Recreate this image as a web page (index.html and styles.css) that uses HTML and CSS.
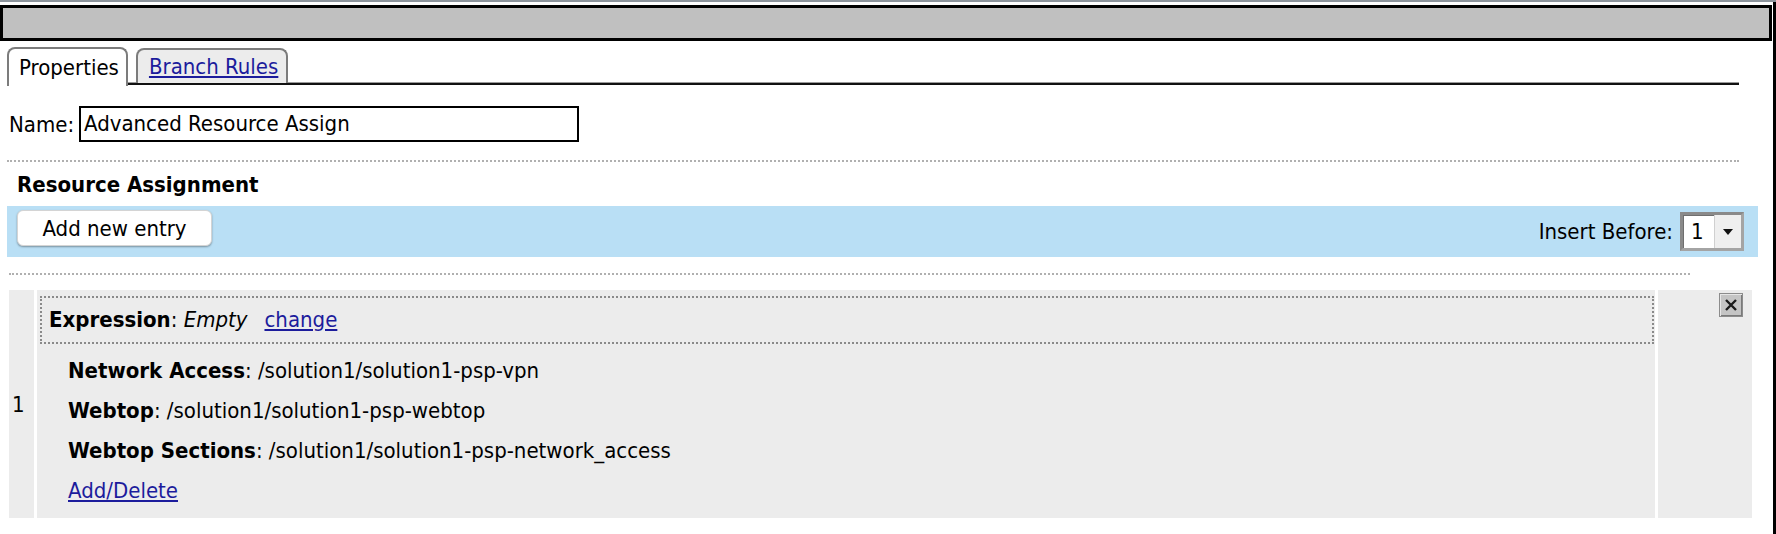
FILE: index.html
```html
<!DOCTYPE html>
<html>
<head>
<meta charset="utf-8">
<link rel="stylesheet" href="styles.css">
</head>
<body>
<div class="topline"></div>
<div class="frame">
  <div class="titlebar"></div>
  <div class="content">
    <div class="tabs">
      <div class="tab active">Properties</div>
      <div class="tab"><a href="#">Branch Rules</a></div>
    </div>
    <div class="namerow">
      <span class="label">Name:</span>
      <div class="input">Advanced Resource Assign</div>
    </div>
    <div class="dots dots-wide"></div>
    <h3 class="section">Resource Assignment</h3>
    <div class="toolbar">
      <button class="btn">Add new entry</button>
      <div class="insert">
        <span>Insert Before:</span>
        <div class="select">
          <span class="val">1</span>
          <span class="arrow"><svg width="10" height="6" viewBox="0 0 10 6"><path d="M0 0 H10 L5 6 Z" fill="#111"/></svg></span>
        </div>
      </div>
    </div>
    <div class="dots dots-narrow"></div>
    <div class="entries">
      <div class="num">1</div>
      <div class="main">
        <div class="expr"><b>Expression</b>: <i>Empty</i><a href="#" class="change">change</a></div>
        <div class="items">
          <div class="item"><b>Network Access</b>: /solution1/solution1-psp-vpn</div>
          <div class="item"><b>Webtop</b>: /solution1/solution1-psp-webtop</div>
          <div class="item"><b>Webtop Sections</b>: /solution1/solution1-psp-network_access</div>
          <div class="item"><a href="#">Add/Delete</a></div>
        </div>
      </div>
      <div class="side">
        <span class="xbtn">
          <svg width="24" height="24" viewBox="0 0 24 24">
            <rect x="0" y="0" width="24" height="24" fill="#8c8c8c"/>
            <rect x="1" y="1" width="22" height="22" fill="#e6e6e6"/>
            <rect x="2" y="2" width="21" height="21" fill="#7a7a7a"/>
            <rect x="2" y="2" width="20" height="20" fill="#c4c4c4"/>
            <path d="M7 7 L17 17 M17 7 L7 17" stroke="#1a1a1a" stroke-width="2.4"/>
          </svg>
        </span>
      </div>
    </div>
  </div>
</div>
</body>
</html>
```
FILE: styles.css
```css
* { box-sizing: border-box; }
html, body { margin: 0; padding: 0; background: #fff; }
body {
  width: 1776px;
  height: 534px;
  overflow: hidden;
  font-family: "DejaVu Sans Condensed", "DejaVu Sans", sans-serif;
  font-size: 22px;
  color: #000;
}
a { color: #1c1c9c; text-decoration: underline; }

.topline { height: 2px; background: #8d959d; }
.frame {
  height: 532px;
  border-right: 3px solid #000;
  padding-top: 3px;
}
.titlebar {
  height: 36px;
  margin-right: 1px;
  border: 3px solid #000;
  background: #c0c0c0;
}
.content { padding-left: 7px; }

.tabs {
  display: flex;
  align-items: flex-end;
  gap: 8px;
  height: 38px;
  margin-top: 6px;
  margin-right: 34px;
  border-bottom: 2px solid #111;
  box-shadow: inset 0 -1px 0 #9a9a9a;
}
.tab {
  height: 35px;
  padding: 4px 8px 0 11px;
  line-height: 26px;
  border: 2px solid #7c7c7c;
  border-bottom: none;
  border-radius: 8px 8px 0 0;
  background: #ececec;
}
.tab.active {
  height: 39px;
  margin-bottom: -3px;
  padding: 6px 7px 0 10px;
  background: #fff;
}

.namerow {
  display: flex;
  align-items: center;
  margin-top: 21px;
}
.label { margin-left: 2px; width: 70px; }
.input {
  width: 500px;
  height: 36px;
  border: 2px solid #000;
  padding: 0 3px;
  line-height: 32px;
}

.dots { height: 2px; border-top: 2px dotted #b0b0b0; }
.dots-wide { margin: 18px 34px 0 0; }
.dots-narrow { margin: 16px 83px 0 2px; }

.section {
  margin: 10px 0 8px 10px;
  font-size: 22px;
  line-height: 26px;
  font-weight: bold;
}

.toolbar {
  display: flex;
  justify-content: space-between;
  align-items: flex-start;
  height: 51px;
  margin-right: 15px;
  padding: 4px 14px 0 10px;
  background: #b9dff5;
}
.btn {
  width: 195px;
  height: 36px;
  font: inherit;
  color: #000;
  background: #fff;
  border: 1px solid #d4d4d4;
  border-radius: 6px;
  box-shadow: 0 1px 2px rgba(0,0,0,0.35);
  padding: 0;
}
.insert {
  display: flex;
  align-items: center;
  gap: 7px;
  margin-top: 2px;
}
.select {
  display: flex;
  width: 64px;
  height: 39px;
  border: 3px solid;
  border-color: #8a8a8a #a4a4a4 #a4a4a4 #8a8a8a;
  box-shadow: inset 1px 1px 0 #6f6f6f;
  background: #fff;
}
.val {
  flex: 1;
  padding-left: 8px;
  line-height: 34px;
}
.arrow {
  width: 27px;
  display: flex;
  align-items: center;
  justify-content: center;
  background: #efefef;
  border-left: 1px solid #d0d0d0;
}

.entries {
  display: grid;
  grid-template-columns: 25px 1fr 94px;
  gap: 3px;
  height: 226px;
  margin: 15px 21px 0 2px;
}
.num {
  display: flex;
  align-items: center;
  padding-left: 3px;
  background: #ececec;
}
.main {
  background: #ececec;
  padding: 6px 1px 7px 3px;
}
.expr {
  border: 2px dotted #8a8a8a;
  padding: 9px 7px;
  line-height: 26px;
}
.change { margin-left: 17px; }
.items { margin-top: 7px; padding-left: 28px; }
.item { line-height: 40px; }
.side {
  display: flex;
  justify-content: flex-end;
  align-items: flex-start;
  padding: 3px 9px 0 0;
  background: #ececec;
}
.xbtn { display: block; width: 24px; height: 24px; }
.xbtn svg { display: block; }
```
